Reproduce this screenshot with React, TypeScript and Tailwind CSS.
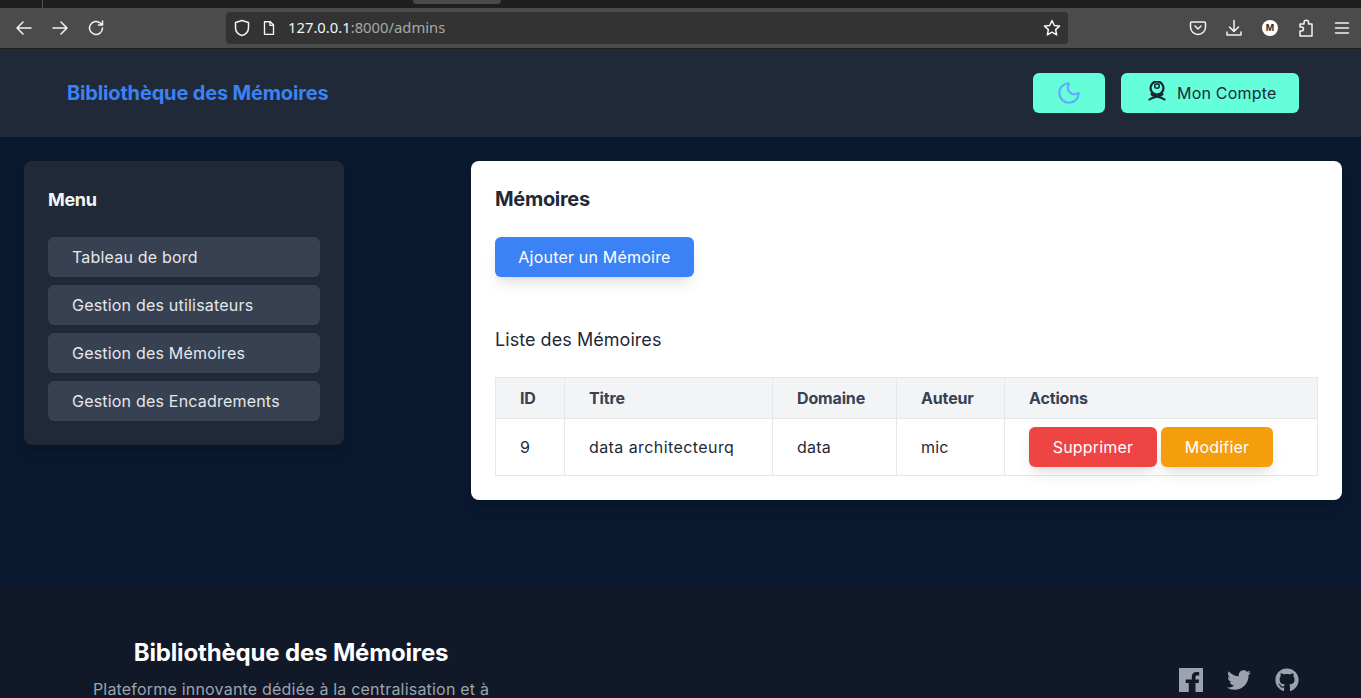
import React from "react";
import { FaTwitter, FaGithub } from "react-icons/fa";
import { Moon } from "lucide-react";

const font = { fontFamily: "Inter, 'Liberation Sans', sans-serif" };

function Tb({ children, w = 20 }: { children: React.ReactNode; w?: number }) {
  return (
    <svg width={w} height={w} viewBox="0 0 20 20" fill="none" stroke="#f4f4f4" strokeWidth="1.5" strokeLinecap="round" strokeLinejoin="round">
      {children}
    </svg>
  );
}

function BrowserBar() {
  return (
    <div className="h-[49px] shrink-0 flex flex-col tracking-normal">
      <div className="relative h-[8px] bg-[#1f1f1f]">
        <div className="absolute left-[42px] top-0 w-px h-[8px] bg-[#555]" />
        <div className="absolute left-[413px] top-0 w-[88px] h-[4px] rounded-b bg-[#4a4a4a]" />
      </div>
      <div className="flex-1 flex items-center bg-[#4b4b4b] border-b border-[#1e1e1e] pl-[14px] pr-[9px]">
        <div className="flex items-center gap-[16px]">
          <Tb><path d="M17 10H3.500M9 4l-6 6 6 6" /></Tb>
          <Tb><path d="M3 10h13.500M11 4l6 6-6 6" /></Tb>
          <Tb><path d="M16.500 10a6.500 6.500 0 1 1-2-4.700L16.500 7M16.500 3v4h-4" /></Tb>
        </div>
        <div className="ml-[120px] w-[842px] h-[32px] -mt-px rounded bg-[#333333] flex items-center pl-[6px] pr-[6px]">
          <Tb><path d="M10 2.500l6.500 2v5c0 4-3 7-6.500 8-3.500-1-6.500-4-6.500-8v-5z" /></Tb>
          <span className="ml-[8px]"><Tb w={18}><path d="M5 3h6.500L15 6.500V17H5zM11 3v4h4" /></Tb></span>
          <span className="ml-[10px] text-[14.800px] text-[#f4f4f4]" style={{ fontFamily: "'Noto Sans', sans-serif" }}>
            127.0.0.1<span className="text-[#a8a8a8]">:8000/admins</span>
          </span>
          <span className="ml-auto"><Tb><path d="M10 2.500l2.300 5 5.200.6-3.900 3.500 1.100 5.300L10 14.200 5.300 16.900l1.100-5.300-3.900-3.500 5.200-.6z" /></Tb></span>
        </div>
        <div className="ml-auto flex items-center gap-[16px]">
          <Tb><path d="M3.500 4h13a1 1 0 0 1 1 1v4a7.500 7.500 0 0 1-15 0V5a1 1 0 0 1 1-1zM7 8l3 3 3-3" /></Tb>
          <Tb><path d="M10 2.500V13M5.500 9l4.500 4.500L14.500 9M3 14v3h14v-3" /></Tb>
          <div className="w-[16px] h-[16px] mx-[2px] rounded-full bg-white flex items-center justify-center text-[9px] font-bold text-[#333]" style={font}>M</div>
          <Tb><path d="M4 18v-5h1.500a2 2 0 0 0 0-4H4V6h4V4.500a2.300 2.300 0 0 1 4.600 0V6H16v12z" /></Tb>
          <Tb><path d="M3.500 5h13M3.500 10h13M3.500 15h13" /></Tb>
        </div>
      </div>
    </div>
  );
}

function AccountIcon() {
  return (
    <svg width="20" height="20" viewBox="0 0 20 20" fill="none" stroke="#1a2238" strokeWidth="2.200" strokeLinecap="round">
      <circle cx="10" cy="7" r="6.500" />
      <circle cx="10" cy="5" r="2.300" strokeWidth="1.500" />
      <path d="M4.500 13c1.500 3 8 1.500 13 5.500M15.500 13c-1.500 3-8 1.500-13 5.500" />
    </svg>
  );
}

const menu = ["Tableau de bord", "Gestion des utilisateurs", "Gestion des Mémoires", "Gestion des Encadrements"];

export default function App() {
  return (
    <div className="h-[698px] overflow-hidden flex flex-col bg-[#0a192f] tracking-[0.2px]" style={font}>
      <BrowserBar />
      <header className="h-[88px] shrink-0 flex items-center justify-between bg-[#1f2937] pl-[67px] pr-[62px]">
        <div className="text-xl font-bold text-[#3b82f6] tracking-[-0.16px]">Bibliothèque des Mémoires</div>
        <div className="flex items-center gap-4">
          <button className="w-[72px] h-[40px] rounded-md bg-[#64ffda] flex items-center justify-center">
            <Moon size={26} color="#6aa5ff" strokeWidth={2} />
          </button>
          <button className="w-[178px] h-[40px] rounded-md bg-[#64ffda] flex items-center pl-[26px] text-[#1f2937]">
            <span className="-mt-[4px]"><AccountIcon /></span>
            <span className="ml-[10px]">Mon Compte</span>
          </button>
        </div>
      </header>
      <main className="h-[450px] shrink-0 flex items-start pt-6 pl-6">
        <aside className="w-[320px] h-[284px] rounded-lg bg-[#1f2937] p-6 shadow-lg">
          <h2 className="text-lg font-bold text-[#f3f4f6] tracking-[-0.35px] leading-[28px] pt-px">Menu</h2>
          <ul className="mt-[23px] flex flex-col gap-2">
            {menu.map((m) => (
              <li key={m} className="h-[40px] flex items-center rounded-md bg-[#374151] px-6 text-[#e5e7eb]">{m}</li>
            ))}
          </ul>
        </aside>
        <section className="ml-[127px] w-[871px] h-[339px] rounded-lg bg-white p-6 shadow-lg">
          <h2 className="text-xl font-bold text-[#1f2937] leading-[28px] tracking-[-0.3px]">Mémoires</h2>
          <button className="mt-[24px] block w-[199px] h-[40px] rounded-md bg-[#3b82f6] text-white shadow-lg">Ajouter un Mémoire</button>
          <h3 className="mt-[48px] pt-px text-lg text-[#1f2937] leading-[28px] tracking-[0.05px]">Liste des Mémoires</h3>
          <table className="mt-[23px] w-[823px] table-fixed border-collapse text-[#1f2937]">
            <thead>
              <tr className="bg-[#f3f4f6] text-[#374151] h-[41px] tracking-[-0.15px]">
                <th className="w-[69px] border border-[#e5e7eb] px-6 text-left font-bold">ID</th>
                <th className="w-[208px] border border-[#e5e7eb] px-6 text-left font-bold">Titre</th>
                <th className="w-[124px] border border-[#e5e7eb] px-6 text-left font-bold">Domaine</th>
                <th className="w-[108px] border border-[#e5e7eb] px-6 text-left font-bold">Auteur</th>
                <th className="border border-[#e5e7eb] px-6 text-left font-bold">Actions</th>
              </tr>
            </thead>
            <tbody>
              <tr className="h-[57px]">
                <td className="border border-[#e5e7eb] px-6">9</td>
                <td className="border border-[#e5e7eb] px-6 tracking-[0.42px]">data architecteurq</td>
                <td className="border border-[#e5e7eb] px-6">data</td>
                <td className="border border-[#e5e7eb] px-6">mic</td>
                <td className="border border-[#e5e7eb] px-6">
                  <div className="flex gap-1">
                    <button className="w-[128px] h-[40px] rounded-md bg-[#ef4444] text-white shadow-lg">Supprimer</button>
                    <button className="w-[112px] h-[40px] rounded-md bg-[#f59e0b] text-white shadow-lg">Modifier</button>
                  </div>
                </td>
              </tr>
            </tbody>
          </table>
        </section>
      </main>
      <footer className="flex-1 bg-[#111827] flex justify-between pl-[67px] pr-[62px]">
        <div className="w-[448px] pt-[50px] text-center">
          <h2 className="text-2xl font-bold text-white leading-[32px] tracking-[-0.16px]">Bibliothèque des Mémoires</h2>
          <p className="mt-2 text-[#9ca3af]">Plateforme innovante dédiée à la centralisation et à</p>
        </div>
        <div className="flex gap-6 pt-[81px] text-[#9ca3af]">
          <svg width="24" height="24" viewBox="0 0 24 24" fill="currentColor">
            <path d="M0 0h24v24h-7.500v-9h3.100l.5-3.600h-3.600V9.100c0-1 .3-1.700 1.800-1.700h1.900V4.200c-.3 0-1.500-.2-2.800-.2-2.800 0-4.600 1.700-4.600 4.800v2.600H6.700V15h3.100v9H0z" />
          </svg>
          <FaTwitter size={24} />
          <FaGithub size={24} />
        </div>
      </footer>
    </div>
  );
}
